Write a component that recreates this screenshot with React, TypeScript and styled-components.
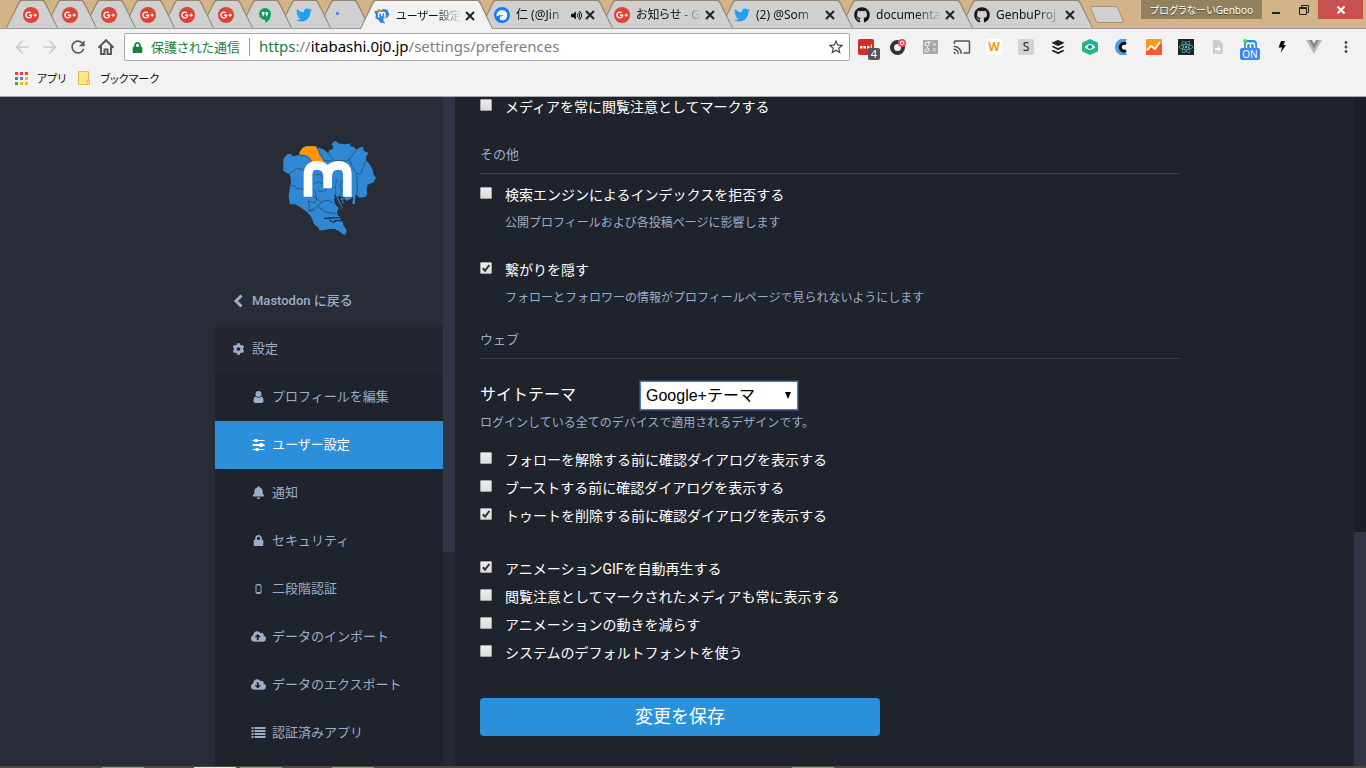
import React from 'react';
import styled, { createGlobalStyle, css } from 'styled-components';
import {
  FaBell, FaBuffer, FaCloudDownloadAlt, FaCloudUploadAlt, FaCog,
  FaGithub, FaGooglePlusG, FaLock, FaReact, FaTwitter, FaVolumeUp,
} from 'react-icons/fa';
import { MdArrowBack, MdArrowForward, MdCast, MdMoreVert, MdRefresh, MdStarBorder } from 'react-icons/md';

const chromeFont = '"Noto Sans", "Noto Sans CJK JP", sans-serif';
const pageFont = 'Roboto, "Noto Sans CJK JP", sans-serif';

const GlobalStyle = createGlobalStyle`
  * { box-sizing: border-box; }
  body { margin: 0; background: #1f232b; }
  button, input, select { font: inherit; margin: 0; }
  a { color: inherit; text-decoration: none; }
`;

const Window = styled.div`
  display: flex;
  flex-direction: column;
  height: 100vh;
  overflow: hidden;
`;

/* ---------- tab strip ---------- */

const TabStrip = styled.div`
  display: flex;
  flex: none;
  height: 29px;
  padding-left: 6px;
  background: #d2b488;
  border-bottom: 1px solid #9b9b9b;
  font-family: ${chromeFont};
  font-feature-settings: "palt";
`;

const Tabs = styled.div`
  display: flex;
  flex: 1;
  min-width: 0;
  isolation: isolate;
`;

const Tab = styled.a<{ $order: number; $pinned?: boolean; $active?: boolean }>`
  position: relative;
  z-index: ${p => p.$order};
  display: flex;
  flex: 0 0 ${p => (p.$pinned ? 52 : 133)}px;
  align-items: center;
  justify-content: ${p => (p.$pinned ? 'center' : 'flex-start')};
  gap: 2px;
  min-width: 0;
  height: ${p => (p.$active ? 29 : 28)}px;
  margin-left: ${p => (p.$active ? 3 : 0)}px;
  margin-right: -13px;
  padding: ${p => (p.$pinned ? '2px 2px 0 0' : '2px 17px 0 14px')};
  color: #111;
  font-size: ${p => (p.$active ? 11 : 12)}px;
  &::before, &::after {
    content: '';
    position: absolute;
    z-index: -1;
    clip-path: polygon(0 100%, 12px 3px, 14px 0, calc(100% - 14px) 0, calc(100% - 12px) 3px, 100% 100%);
  }
  &::before { inset: 0; background: #94866f; }
  &::after { inset: 1px 1px 0; background: ${p => (p.$active ? '#f2f2f2' : '#d0d0d0')}; }
`;

const TabTitle = styled.span`
  flex: 1;
  min-width: 0;
  margin-left: 4px;
  overflow: hidden;
  white-space: nowrap;
  line-height: 20px;
  mask-image: linear-gradient(to right, #000 60%, transparent);
`;

const PlainButton = styled.button`
  display: inline-flex;
  flex: none;
  align-items: center;
  justify-content: center;
  padding: 0;
  border: 0;
  background: none;
  color: inherit;
`;

const NewTab = styled(PlainButton)`
  align-self: center;
  margin-left: 10px;
`;

const WindowControls = styled.div`
  display: flex;
  flex: none;
  align-items: flex-start;
  margin-right: 3px;
`;

const Profile = styled(PlainButton)`
  width: 121px;
  height: 19px;
  background: #93805f;
  color: #fff;
  font-size: 10px;
  white-space: nowrap;
  text-shadow: 0 1px 1px #4b4130;
`;

const ControlButton = styled(PlainButton)<{ $close?: boolean }>`
  width: ${p => (p.$close ? 45 : 28)}px;
  height: 19px;
  background: ${p => (p.$close ? '#c75050' : 'transparent')};
  color: ${p => (p.$close ? '#fff' : '#222')};
`;

const RoundIcon = styled.span<{ $bg: string }>`
  display: inline-flex;
  flex: none;
  align-items: center;
  justify-content: center;
  width: 16px;
  height: 16px;
  border-radius: 50%;
  background: ${p => p.$bg};
  color: #fff;
`;

/* ---------- toolbar ---------- */

const Toolbar = styled.div`
  display: flex;
  flex: none;
  align-items: center;
  height: 36px;
  padding: 0 12px;
  background: #f2f2f2;
  font-family: ${chromeFont};
  font-feature-settings: "palt";
`;

const Navigation = styled.nav`
  display: flex;
  gap: 8px;
  margin-right: 8px;
  color: #5a5a5a;
`;

const NavButton = styled(PlainButton)`
  width: 20px;
  height: 20px;
  &:disabled { color: #ccc; }
`;

const AddressBar = styled.div`
  display: flex;
  flex: 1;
  min-width: 0;
  align-items: center;
  height: 28px;
  padding: 0 4px 0 7px;
  border: 1px solid #a9a9a9;
  border-radius: 2px;
  background: #fff;
  white-space: nowrap;
`;

const Secure = styled.span`
  margin-left: 8px;
  padding-right: 9px;
  border-right: 1px solid #999;
  color: #188038;
  font-size: 13px;
  line-height: 18px;
`;

const Url = styled.a`
  flex: 1;
  overflow: hidden;
  padding: 0 0 2px 9px;
  color: #808080;
  font-size: 15px;
  line-height: 20px;
  em { color: #188038; font-style: normal; }
  b { color: #000; font-weight: 400; }
`;

const Extensions = styled.div`
  display: flex;
  gap: 12px;
  margin: 0 -2px 0 6px;
`;

const Extension = styled(PlainButton)`
  position: relative;
  width: 20px;
  height: 20px;
  color: #555;
`;

const Badge = styled.span<{ $wide?: boolean }>`
  position: absolute;
  top: 11px;
  left: ${p => (p.$wide ? 0 : 12)}px;
  width: ${p => (p.$wide ? 20 : 12)}px;
  border-radius: 2px;
  background: ${p => (p.$wide ? '#4285f4' : '#555')};
  color: #fff;
  font-size: ${p => (p.$wide ? 10 : 11)}px;
  line-height: 12px;
  text-align: center;
`;

const LetterTile = styled.span<{ $bg: string; $color: string; $bold?: boolean }>`
  width: 16px;
  height: 16px;
  border-radius: 2px;
  background: ${p => p.$bg};
  color: ${p => p.$color};
  font: ${p => (p.$bold ? 700 : 400)} 12px/16px ${chromeFont};
  text-align: center;
`;

const Bookmarks = styled.div`
  display: flex;
  flex: none;
  align-items: center;
  gap: 11px;
  height: 32px;
  padding: 0 14px 5px;
  border-bottom: 1px solid #a9a9a9;
  background: #f2f2f2;
  color: #111;
  font-family: ${chromeFont};
  font-feature-settings: "palt";
  font-size: 11px;
`;

const Bookmark = styled.a`
  display: flex;
  align-items: center;
  gap: 9px;
`;

/* ---------- page ---------- */

const Page = styled.div`
  display: flex;
  flex: 1;
  min-height: 0;
  background: #1f232b;
  color: #9baec8;
  font-family: ${pageFont};
  font-size: 13px;
`;

const SidebarWrapper = styled.aside`
  display: flex;
  flex: 1 1 240px;
  justify-content: flex-end;
  min-width: 240px;
  background: #282c37;
`;

const Sidebar = styled.div`
  flex: 0 1 228px;
  overflow: hidden;
  padding-top: 40px;
`;

const LogoLink = styled.a`
  display: flex;
  justify-content: center;
  margin-bottom: 40px;
`;

const Menu = styled.nav`
  display: flex;
  flex-direction: column;
`;

const itemColors = {
  plain: css`background: transparent;`,
  parent: css`background: #242630; border-radius: 4px 0 0;`,
  child: css`background: #1f232b; padding-left: 36px;`,
  selected: css`background: #2b90d9; color: #fff; padding-left: 36px;`,
};

const MenuItem = styled.a<{ $kind: keyof typeof itemColors }>`
  display: flex;
  align-items: center;
  gap: 6px;
  height: 48px;
  padding: 0 16px 4px;
  font-weight: ${p => (p.$kind === 'plain' ? 500 : 400)};
  ${p => itemColors[p.$kind]}
  svg { flex: none; width: 15px; margin-top: 3px; }
`;

const MenuEnd = styled.div`
  height: 48px;
  background: #1f232b;
`;

const Scrollbar = styled.div<{ $track: string }>`
  flex: 0 0 12px;
  display: flex;
  flex-direction: column;
  background: ${p => p.$track};
`;

const Thumb = styled.div<{ $share: number; $bottom?: boolean }>`
  flex: 0 0 ${p => p.$share}%;
  margin-top: ${p => (p.$bottom ? 'auto' : 0)};
  background: #313543;
`;

const Main = styled.main`
  flex: 0 1 899px;
  min-width: 0;
  overflow: hidden;
  padding: 0 25px;
`;

const Form = styled.form`
  max-width: 700px;
`;

const Legend = styled.h2`
  margin: 0;
  padding-bottom: 7px;
  border-bottom: 1px solid #393f4f;
  font-size: 13px;
  font-weight: 400;
  line-height: 22px;
`;

const Section = styled.section<{ $top: number }>`
  margin-top: ${p => p.$top}px;
`;

const Group = styled.div<{ $top: number }>`
  display: flex;
  flex-direction: column;
  gap: 8px;
  margin-top: ${p => p.$top}px;
`;

const CheckLabel = styled.label`
  display: flex;
  gap: 13px;
  color: #fff;
  font-size: 14px;
  line-height: 20px;
`;

const Checkbox = styled.input`
  appearance: none;
  flex: none;
  width: 12px;
  height: 12px;
  margin-top: 2px;
  border: 1px solid #a6a6a6;
  border-radius: 1px;
  background: linear-gradient(#ededed, #dcdcdc);
  &:checked {
    background: url("data:image/svg+xml,%3Csvg xmlns='http://www.w3.org/2000/svg' viewBox='0 0 10 10'%3E%3Cpath d='M1.8 5.2l2.2 2.4L8.4 2' fill='none' stroke='%23333' stroke-width='2'/%3E%3C/svg%3E"), linear-gradient(#ededed, #dcdcdc);
  }
`;

const Hint = styled.p<{ $indent?: boolean }>`
  margin: 0;
  padding-left: ${p => (p.$indent ? 25 : 0)}px;
  font-size: 12px;
  line-height: 20px;
`;

const ThemeRow = styled.div`
  display: flex;
  align-items: center;
  margin: 22px 0 3px;
  color: #fff;
  font-size: 16px;
  line-height: 24px;
  label { flex: 0 0 160px; padding-bottom: 1px; }
`;

const SelectBox = styled.span`
  position: relative;
  display: inline-flex;
  color: #000;
  svg { position: absolute; right: 7px; top: 11px; pointer-events: none; }
`;

const ThemeSelect = styled.select`
  appearance: none;
  width: 158px;
  height: 29px;
  padding: 0 24px 0 5px;
  border: 1px solid #4d78c8;
  border-radius: 0;
  box-shadow: 0 0 0 1px #4d78c866;
  background: #fff;
  color: #000;
  font-family: "Liberation Sans", "Noto Sans CJK JP", sans-serif;
  font-size: 16px;
`;

const SaveButton = styled.button`
  display: block;
  width: 100%;
  max-width: 400px;
  height: 38px;
  margin-top: 35px;
  padding: 0 0 4px;
  border: 0;
  border-radius: 4px;
  background: #2b90d9;
  color: #fff;
  font-size: 18px;
`;

const Taskbar = styled.div`
  display: flex;
  flex: none;
  gap: 4px;
  height: 2px;
  padding: 1px 0 0 102px;
  background: #574a35;
`;

const TaskItem = styled.span<{ $state: string }>`
  width: 42px;
  background: ${p => (p.$state === 'front' ? '#efe6d6' : p.$state === 'open' ? '#a09684' : 'transparent')};
`;

/* ---------- drawings ---------- */

const PlusIcon = () => <RoundIcon $bg="#db4437"><FaGooglePlusG size={12} /></RoundIcon>;

const CloseIcon = () => (
  <svg width="12" height="12" viewBox="0 0 12 12" stroke="#222" strokeWidth="2">
    <path d="M2 2l8 8M10 2l-8 8" />
  </svg>
);

const HangoutsIcon = () => (
  <svg width="16" height="16" viewBox="0 0 16 16">
    <path d="M8 1a6 6 0 1 0 .3 12v3C12 14 14 11 14 7a6 6 0 0 0-6-6z" fill="#0f9d58" />
    <path d="M5 5h2.4v2.6L6.2 9.2H5.4l.6-1.6H5zM8.6 5H11v2.6L9.8 9.2H9l.6-1.6h-1z" fill="#fff" />
  </svg>
);

const LoadingIcon = () => (
  <svg width="16" height="16" viewBox="0 0 16 16"><rect x="1" y="5" width="3" height="3" rx="1" fill="#4285f4" /></svg>
);

const MstdnJpIcon = () => (
  <svg width="16" height="16" viewBox="0 0 16 16">
    <circle cx="8" cy="8" r="8" fill="#0d7cff" />
    <path d="M2.500 9.500C2 5.500 5 3 8.500 3.300c3.500.2 5.500 3 4.500 6.200l-1 2.500-2 1.200H6.500L5.500 11l1-1.500-1.500-1z" fill="#fff" />
    <path d="M5 8l2.500 1L9 8" stroke="#0d7cff" fill="none" />
  </svg>
);

const HomeIcon = () => (
  <svg width="18" height="18" viewBox="0 0 18 18" fill="none" stroke="#5a5a5a" strokeWidth="2">
    <path d="M1.500 9.700L9 2.200l7.500 7.500M4 8v8h3.500v-4.500h3V16H14V8" />
  </svg>
);

const land =
  'M250 185L262 172L272 170L278 178L297 174L299 164L308 152L318 148L348 148L352 152L370 157L384 168L388 160L398 156L400 148L395 142L400 134L408 132L414 139L432 142L448 140L453 137L450 148L462 150L470 158L475 154L484 150L491 151L490 160L497 165L506 167L499 178L498 190L508 200L518 218L520 232L528 243L520 256L502 264L500 280L502 292L496 300L478 302L474 296L467 294L465 312L464 322L457 320L458 310L460 300L440 312L434 306L426 308L434 320L428 318L424 308L418 298L414 302L428 332L422 335L412 316L406 300L402 306L405 320L416 334L411 344L414 356L424 361L421 368L398 370L428 374L430 384L440 400L436 413L428 412L420 404L404 396L388 396L370 400L358 400L356 394L342 380L334 360L320 344L300 330L286 322L270 322L266 300L270 268L273 258L272 244L268 230L264 230L250 222Z';

const districts =
  'M268 230L292 214L311 218M297 174L322 178L334 192M352 152L358 165L372 190L396 192M384 168L392 178L400 190L440 192L448 186L470 158M448 186L456 208L470 230L482 230L498 190M470 230L472 270L470 298M270 264L286 268L290 274L311 276M344 234L360 232L370 244M340 262L354 254L372 262M354 282L368 284L380 276M337 296L350 306L345 318L324 312L328 326L326 342M345 280L350 306L362 314L384 310L400 318M352 328L366 316M352 328L378 346L410 350M326 342L340 336L352 328M410 246L406 270L408 290M426 250L420 262L424 282L418 298M372 366L400 362M366 220L372 230M390 276L402 270M330 344L344 338';

const ItabashiLogo = () => (
  <svg width="100" height="100" viewBox="237 120 300 300" role="img" aria-label="Itabashi Mastodon">
    <path d={land} fill="#3088d4" />
    <path d="M299 166L308 153L318 148L348 148L350 156L356 160L356 172L370 190L372 200L336 196L332 184L316 174L299 172Z" fill="#ff9500" />
    <path d={districts} fill="none" stroke="#22435f" strokeWidth="2" />
    <path d="M404 292L412 312L424 334M412 300L434 302M372 364L424 362M388 368L398 376M400 376L410 370" stroke="#282c37" strokeWidth="4" />
    <path d="M324 299V234Q324 205 350 205Q383 205 383 242V274M383 242Q383 205 416 205Q442 205 442 234V299" fill="none" stroke="#fff" strokeWidth="26" />
  </svg>
);

const SmallLogo = () => (
  <svg width="16" height="16" viewBox="237 120 300 300">
    <path d={land} fill="#3088d4" />
    <path d="M290 180L310 145L360 145L375 195Z" fill="#ff9500" />
    <path d="M324 299V234Q324 205 350 205Q383 205 383 242V274M383 242Q383 205 416 205Q442 205 442 234V299" fill="none" stroke="#fff" strokeWidth="26" />
  </svg>
);

const ChevronIcon = () => (
  <svg width="14" height="14" viewBox="0 0 14 14" fill="none" stroke="currentColor" strokeWidth="3">
    <path d="M10 1.500L4.500 7l5.500 5.500" />
  </svg>
);

const UserIcon = () => (
  <svg width="14" height="14" viewBox="0 0 14 14" fill="currentColor">
    <circle cx="7" cy="4" r="3" />
    <path d="M4.300 6.500a4 4 0 0 0 5.400 0C11.500 7 12 8.800 12 10.700 12 12 11.200 13 10 13H4c-1.200 0-2-1-2-2.300C2 8.800 2.500 7 4.300 6.500z" />
  </svg>
);

const SlidersIcon = () => (
  <svg width="14" height="14" viewBox="0 0 14 14" fill="currentColor">
    <path d="M1 2h12v1H1zM1 6h12v2H1zM1 11h12v1H1z" />
    <path d="M3 1h3v3H3zM8 5h3v4H8zM4 10h3v3H4z" />
  </svg>
);

const MobileIcon = () => (
  <svg width="14" height="14" viewBox="0 0 14 14" fill="none" stroke="currentColor">
    <rect x="4.500" y="2.500" width="5" height="9" rx="1" />
    <path d="M5 3h4M5 10.500h4" />
  </svg>
);

const ListIcon = () => (
  <svg width="14" height="14" viewBox="0 0 14 14" fill="currentColor">
    <path d="M0 1h2v2H0zM3 1h11v2H3zM0 4h2v2H0zM3 4h11v2H3zM0 7h2v2H0zM3 7h11v2H3zM0 10h2v2H0zM3 10h11v2H3z" />
  </svg>
);

/* ---------- data ---------- */

const github = <FaGithub size={16} color="#181616" />;
const twitter = <FaTwitter size={16} color="#1da1f2" />;

const pinned = [
  ...Array.from({ length: 6 }, (_, i) => ({ name: `Google+ ${i + 1}`, icon: <PlusIcon /> })),
  { name: 'Hangouts', icon: <HangoutsIcon /> },
  { name: 'Twitter', icon: twitter },
  { name: 'Loading', icon: <LoadingIcon /> },
];

const openTabs = [
  { title: 'ユーザー設定', icon: <SmallLogo />, active: true },
  { title: '仁 (@Jin', icon: <MstdnJpIcon />, sound: true },
  { title: 'お知らせ - G', icon: <PlusIcon /> },
  { title: '(2) @Som', icon: twitter },
  { title: 'documenta', icon: github },
  { title: 'GenbuProj', icon: github },
];

const extensions: { name: string; icon: React.ReactNode }[] = [
  {
    name: 'Passwords',
    icon: (
      <>
        <svg width="16" height="16" viewBox="0 0 16 16">
          <rect width="16" height="16" rx="2" fill="#d32d27" />
          <path d="M2 7h2.500v2.500H2zM5.500 7H8v2.500H5.500zM9 7h2.500v2.500H9zM12.800 5.500h1.200v5h-1.200z" fill="#fff" />
        </svg>
        <Badge>4</Badge>
      </>
    ),
  },
  {
    name: 'Recorder',
    icon: (
      <svg width="16" height="16" viewBox="0 0 16 16" fill="none">
        <circle cx="7.500" cy="8.500" r="5.500" stroke="#333" strokeWidth="4" />
        <circle cx="12" cy="4" r="4" fill="#f44355" />
        <circle cx="12" cy="4" r="1.800" stroke="#fff" />
      </svg>
    ),
  },
  {
    name: 'News',
    icon: (
      <svg width="16" height="16" viewBox="0 0 16 16" fill="none">
        <rect x="1" y="1" width="15" height="14" fill="#a8a8a8" />
        <path d="M11 4h3v3h-3zM11 9h3v3h-3z" fill="#c8c8c8" />
        <circle cx="5" cy="5" r="2" stroke="#fff" />
        <path d="M6 3h3M5 8l2 2c1 3-4.500 4-4.500 1.500 0-1 1-1.500 3-1.500" stroke="#fff" />
      </svg>
    ),
  },
  { name: 'Cast', icon: <MdCast size={18} /> },
  { name: 'Wox', icon: <LetterTile $bg="#fff" $color="#f59a13" $bold>W</LetterTile> },
  { name: 'Stylus', icon: <LetterTile $bg="#d2d2d2" $color="#222">S</LetterTile> },
  { name: 'Buffer', icon: <FaBuffer size={16} color="#222" /> },
  {
    name: 'Eye',
    icon: (
      <svg width="16" height="16" viewBox="0 0 16 16">
        <path d="M8 0l8 3.800v8.400L8 16l-8-3.800V3.800z" fill="#1fb58a" />
        <path d="M2.500 8Q8 2 13.500 8 8 14 2.500 8z" fill="#fff" />
        <circle cx="8" cy="8" r="2" fill="#2b7f9d" />
      </svg>
    ),
  },
  {
    name: 'Clip',
    icon: (
      <svg width="16" height="16" viewBox="0 0 16 16" fill="none">
        <path d="M12 2A6.500 6.500 0 1 0 12 14" stroke="#4a9fe0" strokeWidth="4" />
        <path d="M12 5a3.800 3.800 0 1 0 0 6.500" stroke="#111" strokeWidth="3" />
      </svg>
    ),
  },
  {
    name: 'Analytics',
    icon: (
      <svg width="16" height="16" viewBox="0 0 16 16">
        <rect width="16" height="16" rx="1" fill="#f79a20" />
        <path d="M0 12l5-4 3 3 7-7 1 1v11H0z" fill="#f4592b" />
        <path d="M1 11.500L5 7l4 3 5-7" stroke="#fff" strokeWidth="1.800" fill="none" />
      </svg>
    ),
  },
  {
    name: 'React',
    icon: <ReactTile />,
  },
  {
    name: 'Page export',
    icon: (
      <svg width="16" height="16" viewBox="0 0 16 16">
        <path d="M3 1h6l4 4v10H3z" fill="#ccc" />
        <path d="M5 9h3V7l3 3-3 3v-2H5z" fill="#fff" />
      </svg>
    ),
  },
  {
    name: 'Mastodon',
    icon: (
      <>
        <svg width="16" height="16" viewBox="0 0 16 16" fill="none">
          <path d="M2 11V4a3 3 0 0 1 3-3h7a4 4 0 0 1 3 4v6z" fill="#2b90d9" />
          <path d="M4.500 9V6a2 2 0 0 1 4 0v3M8.500 6a2 2 0 0 1 4 0v3" stroke="#fff" strokeWidth="1.500" />
          <circle cx="3" cy="2" r="2" fill="#4cd964" />
        </svg>
        <Badge $wide>ON</Badge>
      </>
    ),
  },
  {
    name: 'Bolt',
    icon: (
      <svg width="16" height="16" viewBox="0 0 16 16"><path d="M7 2h4L9.500 6H12l-5.500 8L8 8.500H4.500z" fill="#111" /></svg>
    ),
  },
  {
    name: 'Vue',
    icon: (
      <svg width="16" height="16" viewBox="0 0 16 16">
        <path d="M0 1h16L8 15z" fill="#b9b9b9" />
        <path d="M3 1h10L8 10z" fill="#8a8a8a" />
        <path d="M6 1h4L8 4.500z" fill="#f2f2f2" />
      </svg>
    ),
  },
];

const Tile = styled.span`
  display: inline-flex;
  padding: 1px;
  background: #222;
  color: #53c1de;
`;

function ReactTile() {
  return <Tile><FaReact size={14} /></Tile>;
}

const menu = [
  { text: 'プロフィールを編集', icon: <UserIcon /> },
  { text: 'ユーザー設定', icon: <SlidersIcon />, selected: true },
  { text: '通知', icon: <FaBell size={13} /> },
  { text: 'セキュリティ', icon: <FaLock size={11} /> },
  { text: '二段階認証', icon: <MobileIcon /> },
  { text: 'データのインポート', icon: <FaCloudUploadAlt size={15} /> },
  { text: 'データのエクスポート', icon: <FaCloudDownloadAlt size={15} /> },
  { text: '認証済みアプリ', icon: <ListIcon /> },
];

const taskItems = Array.from({ length: 16 }, (_, i) => (i === 2 ? 'front' : [0, 3, 5, 15].includes(i) ? 'open' : 'none'));

const Check = ({ children, on }: { children: React.ReactNode; on?: boolean }) => (
  <CheckLabel>
    <Checkbox type="checkbox" defaultChecked={on} />
    {children}
  </CheckLabel>
);

const BrowserTabs = () => (
  <TabStrip>
    <Tabs>
      {pinned.map((t, i) => (
        <Tab key={t.name} href="#" $pinned $order={20 - i} aria-label={t.name}>{t.icon}</Tab>
      ))}
      {openTabs.map((t, i) => (
        <Tab key={t.title} href="#" $active={t.active} $order={t.active ? 30 : 10 - i}>
          {t.icon}
          <TabTitle>{t.title}</TabTitle>
          {t.sound && <FaVolumeUp size={11} />}
          <CloseIcon />
        </Tab>
      ))}
      <NewTab aria-label="New tab">
        <svg width="34" height="17" viewBox="0 0 34 17">
          <path d="M2 .5h23q2 0 3 2l5 12q.5 2-1.500 2H9q-2 0-3-2l-5-12Q.5.5 2 .5z" fill="#d0d0d0" stroke="#a08f70" />
        </svg>
      </NewTab>
    </Tabs>
    <WindowControls>
      <Profile>プログラなーいGenboo</Profile>
      <ControlButton aria-label="Minimize">
        <svg width="10" height="10"><path d="M1 7h8v2H1z" fill="currentColor" /></svg>
      </ControlButton>
      <ControlButton aria-label="Restore">
        <svg width="10" height="10" fill="none" stroke="currentColor">
          <path d="M.5 2.500h7v7h-7zM.5 3.500h7M2.500 2V.5h7v7H8" />
        </svg>
      </ControlButton>
      <ControlButton $close aria-label="Close">
        <svg width="8" height="8" stroke="currentColor" strokeWidth="2"><path d="M.5.5l7 7M7.500.5l-7 7" /></svg>
      </ControlButton>
    </WindowControls>
  </TabStrip>
);

const BrowserToolbar = () => (
  <Toolbar>
    <Navigation>
      <NavButton disabled aria-label="Back"><MdArrowBack size={20} /></NavButton>
      <NavButton disabled aria-label="Forward"><MdArrowForward size={20} /></NavButton>
      <NavButton aria-label="Reload"><MdRefresh size={20} /></NavButton>
      <NavButton aria-label="Home"><HomeIcon /></NavButton>
    </Navigation>
    <AddressBar>
      <FaLock size={11} color="#188038" />
      <Secure>保護された通信</Secure>
      <Url href="#"><em>https</em>://<b>itabashi.0j0.jp</b>/settings/preferences</Url>
      <PlainButton aria-label="Bookmark this page"><MdStarBorder size={18} color="#444" /></PlainButton>
    </AddressBar>
    <Extensions>
      {extensions.map(e => <Extension key={e.name} aria-label={e.name}>{e.icon}</Extension>)}
      <Extension aria-label="Menu"><MdMoreVert size={18} /></Extension>
    </Extensions>
  </Toolbar>
);

const BookmarkBar = () => (
  <Bookmarks>
    <Bookmark href="#">
      <svg width="14" height="14" viewBox="0 0 14 14">
        <path d="M1 1h3v3H1zM6 1h3v3H6zM11 1h3v3h-3z" fill="#ea4335" />
        <path d="M1 6h3v3H1zM1 11h3v3H1z" fill="#34a853" />
        <path d="M6 6h3v3H6z" fill="#4285f4" />
        <path d="M11 6h3v3h-3zM6 11h3v3H6zM11 11h3v3h-3z" fill="#fbbc05" />
      </svg>
      アプリ
    </Bookmark>
    <Bookmark href="#">
      <svg width="14" height="14" viewBox="0 0 14 14">
        <path d="M1.500.5h10v9h1v4h-11z" fill="#ffe591" stroke="#e9bd45" />
        <path d="M10 13V9.500h2" fill="none" stroke="#e9bd45" />
      </svg>
      ブックマーク
    </Bookmark>
  </Bookmarks>
);

export default function App() {
  return (
    <Window>
      <GlobalStyle />
      <BrowserTabs />
      <BrowserToolbar />
      <BookmarkBar />
      <Page>
        <SidebarWrapper>
          <Sidebar>
            <LogoLink href="#"><ItabashiLogo /></LogoLink>
            <Menu>
              <MenuItem href="#" $kind="plain"><ChevronIcon />Mastodon に戻る</MenuItem>
              <MenuItem href="#" $kind="parent"><FaCog size={12} />設定</MenuItem>
              {menu.map(m => (
                <MenuItem key={m.text} href="#" $kind={m.selected ? 'selected' : 'child'}>
                  {m.icon}
                  {m.text}
                </MenuItem>
              ))}
              <MenuEnd />
            </Menu>
          </Sidebar>
          <Scrollbar $track="#252932"><Thumb $share={68} /></Scrollbar>
        </SidebarWrapper>
        <Main>
          <Form>
            <Check>メディアを常に閲覧注意としてマークする</Check>
            <Section $top={27}>
              <Legend>その他</Legend>
              <Group $top={11}>
                <Check>検索エンジンによるインデックスを拒否する</Check>
                <Hint $indent>公開プロフィールおよび各投稿ページに影響します</Hint>
              </Group>
              <Group $top={27}>
                <Check on>繋がりを隠す</Check>
                <Hint $indent>フォローとフォロワーの情報がプロフィールページで見られないようにします</Hint>
              </Group>
            </Section>
            <Section $top={21}>
              <Legend>ウェブ</Legend>
              <ThemeRow>
                <label htmlFor="theme">サイトテーマ</label>
                <SelectBox>
                  <ThemeSelect id="theme"><option>Google+テーマ</option></ThemeSelect>
                  <svg width="6" height="7"><path d="M0 0h6L3 7z" fill="currentColor" /></svg>
                </SelectBox>
              </ThemeRow>
              <Hint>ログインしている全てのデバイスで適用されるデザインです。</Hint>
              <Group $top={17}>
                <Check>フォローを解除する前に確認ダイアログを表示する</Check>
                <Check>ブーストする前に確認ダイアログを表示する</Check>
                <Check on>トゥートを削除する前に確認ダイアログを表示する</Check>
              </Group>
              <Group $top={33}>
                <Check on>アニメーションGIFを自動再生する</Check>
                <Check>閲覧注意としてマークされたメディアも常に表示する</Check>
                <Check>アニメーションの動きを減らす</Check>
                <Check>システムのデフォルトフォントを使う</Check>
              </Group>
            </Section>
            <SaveButton type="button">変更を保存</SaveButton>
          </Form>
        </Main>
        <Scrollbar $track="#1b1e25"><Thumb $share={35} $bottom /></Scrollbar>
      </Page>
      <Taskbar>
        {taskItems.map((state, i) => <TaskItem key={i} $state={state} />)}
      </Taskbar>
    </Window>
  );
}
